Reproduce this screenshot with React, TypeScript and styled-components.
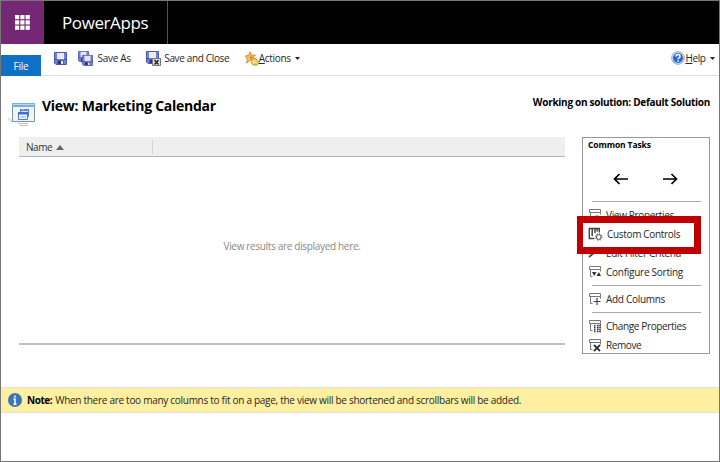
import React from 'react';
import styled, { createGlobalStyle } from 'styled-components';

const GlobalStyle = createGlobalStyle`
  *, *::before, *::after { box-sizing: border-box; }
  body { margin: 0; background: #fff; }
`;

const Page = styled.div`
  display: flex;
  flex-direction: column;
  width: 720px;
  height: 462px;
  border: 1px solid #777;
  background: #fff;
  color: #262626;
  font-family: "Open Sans", "Noto Sans", sans-serif;
  font-size: 10px;
  line-height: 14px;
  letter-spacing: -0.3px;
  white-space: nowrap;
  overflow: hidden;
  svg { display: block; flex: none; }
`;

const TopBar = styled.header`
  display: flex;
  flex: none;
  height: 43px;
  background: #000;
`;

const Launcher = styled.button`
  display: grid;
  place-items: center;
  width: 43px;
  padding: 0;
  border: 0;
  background: #742774;
`;

const Brand = styled.div`
  display: flex;
  align-items: center;
  width: 124px;
  padding: 1px 0 0 18px;
  border-right: 1px solid #555;
  color: #fff;
  font-size: 17px;
  letter-spacing: -0.4px;
`;

const Ribbon = styled.div`
  display: flex;
  flex: none;
  height: 32px;
`;

const FileTab = styled.button`
  align-self: flex-end;
  width: 40px;
  height: 21px;
  padding: 1px 0 0;
  border: 0;
  background: #0f70c6;
  color: #fff;
  font: inherit;
  letter-spacing: -0.2px;
`;

const Commands = styled.div`
  display: flex;
  flex: 1;
  align-items: center;
  padding: 0 4px 3px 13px;
  border-bottom: 1px solid #dedede;
`;

const Command = styled.div<{ $gap?: number; $after?: number; $tracking?: number }>`
  display: flex;
  align-items: center;
  gap: ${p => p.$gap ?? 5}px;
  margin-right: ${p => p.$after ?? 0}px;
  letter-spacing: ${p => p.$tracking ?? -0.3}px;
  &:last-child { margin-left: auto; }
`;

const CaretMark = styled.svg`
  margin: 1px 0 0 4px;
`;

const TitleRow = styled.div`
  display: flex;
  flex: none;
  justify-content: space-between;
  height: 61px;
  padding: 19px 9px 0 8px;
  color: #000;
  font-weight: 700;
`;

const TitleGroup = styled.div`
  display: flex;
  gap: 6px;
  svg { margin: 6px 1px 0 -1px; }
`;

const Title = styled.h1`
  margin: 0;
  font-size: 14px;
  line-height: 22px;
  letter-spacing: -0.26px;
`;

const Solution = styled.div`
  letter-spacing: -0.28px;
`;

const Main = styled.main`
  display: flex;
  flex: none;
  justify-content: space-between;
  align-items: flex-start;
  height: 250px;
  padding: 0 9px 0 18px;
`;

const Grid = styled.section`
  display: flex;
  flex-direction: column;
  width: 546px;
  height: 208px;
  border-bottom: 2px solid #c0c0c0;
`;

const GridHead = styled.div`
  display: flex;
  align-items: center;
  height: 20px;
  border-bottom: 1px solid #b4b4b4;
  background: #efefef;
`;

const HeadCell = styled.div`
  display: flex;
  align-items: center;
  gap: 4px;
  width: 134px;
  height: 14px;
  padding-left: 7px;
  border-right: 1px solid #d4d4d4;
  color: #333;
  letter-spacing: -0.45px;
`;

const SortMark = styled.span`
  margin-top: 2px;
  border: 4px solid transparent;
  border-top: 0;
  border-bottom: 5px solid #666;
`;

const Empty = styled.div`
  display: grid;
  flex: 1;
  place-items: center;
  padding-bottom: 8px;
  color: #888;
  letter-spacing: -0.325px;
`;

const Tasks = styled.aside`
  position: relative;
  width: 128px;
  height: 217px;
  border: 1px solid #999;
  overflow: visible;
`;

const TasksTitle = styled.h2`
  margin: 1px 0 0 5px;
  color: #000;
  font-size: 8.5px;
  line-height: 12px;
  letter-spacing: -0.12px;
`;

const Arrows = styled.div`
  display: flex;
  gap: 35px;
  height: 50px;
  padding: 21px 0 0 30px;
`;

const Rule = styled.hr`
  width: 109px;
  height: 1px;
  margin: 0 0 0 9px;
  border: 0;
  background: #aaa;
`;

const TaskList = styled.div<{ $pad: string }>`
  padding: ${p => p.$pad};
`;

const Task = styled.div<{ $tracking: number }>`
  display: flex;
  align-items: center;
  gap: 4px;
  height: 19px;
  padding-left: 5px;
  letter-spacing: ${p => p.$tracking}px;
`;

const Highlight = styled.div`
  position: absolute;
  top: 78px;
  left: -6px;
  width: 124px;
  height: 38px;
  border: 7px solid #c00000;
  border-left-width: 6px;
  background: #fff;
  ${Task} { height: 22px; }
`;

const Note = styled.div`
  display: flex;
  flex: none;
  align-items: center;
  height: 26px;
  padding-left: 7px;
  border: solid #dedede;
  border-width: 1px 0;
  background: #ffefa0;
  strong { margin: 0 3px 0 5px; color: #000; letter-spacing: -0.45px; }
  span { letter-spacing: -0.284px; }
`;

const Caret = () => (
  <CaretMark width="5" height="3"><path d="M0 0h5L2.5 3z" fill="#222" /></CaretMark>
);

const Disk = ({ x = 0, y = 0, s = 1 }: { x?: number; y?: number; s?: number }) => (
  <g transform={`translate(${x} ${y}) scale(${s})`}>
    <path d="M.5.5h12v12H2L.5 11z" fill="#7480d2" stroke="#4c58ac" />
    <path d="M3 1h7v6H3z" fill="#e6eafb" />
    <path d="M1 7h2v1H1zM10 7h2v1h-2z" fill="#3446b0" />
    <path d="M3.5 8.5h6V12h-6z" fill="#27358c" />
    <path d="M7 9h2v3H7z" fill="#e9edff" />
  </g>
);

const SaveIcon = () => <svg width="13" height="13"><Disk /></svg>;
const SaveAsIcon = () => (
  <svg width="15" height="15">
    <Disk s={0.85} />
    <Disk x={4} y={4} s={0.84} />
  </svg>
);
const SaveCloseIcon = () => (
  <svg width="15" height="15">
    <Disk />
    <path d="M6.5 7.5h8v7h-8z" fill="#dedede" stroke="#777" />
    <path d="M8.5 9l4 4.5m0-4.5l-4 4.5" stroke="#222" strokeWidth="1.4" />
  </svg>
);
const ActionsIcon = () => (
  <svg width="14" height="15">
    <path d="M5 .8l1.5 3.4 4-.2-2.8 3 1.2 4-3.6-1.7L1.6 12l.7-4L.3 5l3.5-.7z" fill="#f8bb68" stroke="#dc812c" strokeWidth=".9" />
    <path d="M5.5 5.5l3 2.2 1.5-.5 3.5 3.3c1 2-.8 3.8-3 3.7-2 0-3.8-1-4.2-2.6l1-1z" fill="#f6cd50" stroke="#a77913" strokeWidth=".8" />
    <path d="M7 11l2.5-1.4M8 12.5l2.5-1.3" stroke="#fff2ae" />
  </svg>
);
const HelpIcon = () => (
  <svg width="14" height="14">
    <circle cx="7" cy="7" r="6.3" fill="#dbe5f5" stroke="#8c9fc2" />
    <circle cx="7" cy="7" r="5" fill="#286bd0" />
    <path d="M5 5.4c0-2.4 4-2.4 4 0C9 7 7.1 6.8 7.1 8.3M7.1 9.3v1.4" fill="none" stroke="#fff" strokeWidth="1.5" />
  </svg>
);
const ViewIcon = () => (
  <svg width="27" height="26">
    <path d="M0 16l4 3v3l-4-3z" fill="#e2e2e2" />
    <path d="M4.5 2.5h22v18h-22z" fill="#f1f4f5" stroke="#7f9299" />
    <path d="M4 2h23v4H4z" fill="#78afdc" />
    <path d="M5 3h21v1H5z" fill="#b8d9f1" />
    <path d="M12.5 8.5h8v7h-8z" fill="#d5e4ff" stroke="#4d79d1" />
    <path d="M12 8h9v2h-9z" fill="#5c83df" />
    <path d="M14 8h2v1h-2z" fill="#e79ac4" />
    <path d="M10.5 11.5h9v7h-9z" fill="#f1f6ff" stroke="#4d79d1" />
    <path d="M10 11h10v2.5H10z" fill="#3e6fd5" />
    <path d="M12 16h6" stroke="#91aee6" />
    <path d="M10 22.5h10M12 24.5h8" stroke="#b3c3cf" />
  </svg>
);

const glyphs: Record<string, React.ReactNode> = {
  view: <path d="M7 8h4v4H7z" />,
  sort: <><path d="M4 7h4.4L6.2 11z" fill="#333" stroke="none" /><path d="M8.6 11H13l-2.2-4z" fill="#333" stroke="none" /></>,
  add: <path d="M9 6v7M5.5 9.5h7" stroke="#444" strokeWidth="1.2" />,
  change: <path d="M6 6.5h1.5M9 6.5h4M6 8.5h1.5M9 8.5h4M6 10.5h1.5M9 10.5h4M6 12.5h1.5M9 12.5h4" stroke="#333" strokeDasharray="1.6 .7" strokeWidth="1.3" />,
  remove: <path d="M6 7l6 6m0-6l-6 6" stroke="#333" strokeWidth="1.8" />,
};

const TaskIcon = ({ kind }: { kind: string }) => {
  if (kind === 'custom') {
    return (
      <svg width="15" height="14" fill="none" stroke="#444">
        <path d="M1.3 11.5V1.5h10v4M.6 11.5h5.8" strokeWidth="1.4" />
        <path d="M4.2 2v7M7 2v4M9.2 2v2.5" strokeWidth="1.5" />
        <circle cx="10.8" cy="10" r="2.4" />
        <circle cx="10.8" cy="10" r="3.3" strokeDasharray="1 1.6" />
      </svg>
    );
  }
  if (kind === 'filter') {
    return (
      <svg width="14" height="14" fill="none" stroke="#444">
        <path d="M7 6L1 11" strokeWidth="1.8" />
        <path d="M6 4l4 3 2-2" />
      </svg>
    );
  }
  return (
    <svg width="14" height="14" fill="none" stroke="#777">
      <path d="M4.5 11.5h-2v-7M1.5 1.5h11v3h-11zM12.5 4.5v2" />
      {glyphs[kind]}
    </svg>
  );
};

const Item = ({ kind, text, tracking }: { kind: string; text: string; tracking: number }) => (
  <Task $tracking={tracking}><TaskIcon kind={kind} />{text}</Task>
);

export default function App() {
  return (
    <>
      <GlobalStyle />
      <Page>
        <TopBar>
          <Launcher aria-label="App launcher">
            <svg width="15" height="15" fill="#fff">
              {[0, 5.3, 10.6].map(y => [0, 5.3, 10.6].map(x => <rect key={`${x}-${y}`} x={x} y={y} width="4.2" height="4.2" />))}
            </svg>
          </Launcher>
          <Brand>PowerApps</Brand>
        </TopBar>
        <Ribbon>
          <FileTab>File</FileTab>
          <Commands>
            <Command $after={11}><SaveIcon /></Command>
            <Command $gap={4.5} $after={15}><SaveAsIcon />Save As</Command>
            <Command $gap={3.5} $after={15.5} $tracking={-0.35}><SaveCloseIcon />Save and Close</Command>
            <Command $gap={0}><ActionsIcon /><span><u>A</u>ctions</span><Caret /></Command>
            <Command $gap={0.5} $tracking={-0.4}><HelpIcon /><span><u>H</u>elp</span><Caret /></Command>
          </Commands>
        </Ribbon>
        <TitleRow>
          <TitleGroup><ViewIcon /><Title>View: Marketing Calendar</Title></TitleGroup>
          <Solution>Working on solution: Default Solution</Solution>
        </TitleRow>
        <Main>
          <Grid>
            <GridHead><HeadCell>Name<SortMark /></HeadCell></GridHead>
            <Empty>View results are displayed here.</Empty>
          </Grid>
          <Tasks>
            <TasksTitle>Common Tasks</TasksTitle>
            <Arrows>
              <svg width="15" height="14" fill="none" stroke="#000" strokeWidth="1.7"><path d="M15 7H1.5M6.5 2l-5 5 5 5" /></svg>
              <svg width="15" height="14" fill="none" stroke="#000" strokeWidth="1.7"><path d="M0 7h13.5M8.5 2l5 5-5 5" /></svg>
            </Arrows>
            <Rule />
            <TaskList $pad="3px 0 4px">
              <Item kind="view" text="View Properties" tracking={-0.32} />
              <Item kind="custom" text="Custom Controls" tracking={-0.33} />
              <Item kind="filter" text="Edit Filter Criteria" tracking={-0.28} />
              <Item kind="sort" text="Configure Sorting" tracking={-0.26} />
            </TaskList>
            <Rule />
            <TaskList $pad="3px 0 4px"><Item kind="add" text="Add Columns" tracking={-0.3} /></TaskList>
            <Rule />
            <TaskList $pad="3px 0 0">
              <Item kind="change" text="Change Properties" tracking={-0.36} />
              <Item kind="remove" text="Remove" tracking={-0.4} />
            </TaskList>
            <Highlight><Item kind="custom" text="Custom Controls" tracking={-0.33} /></Highlight>
          </Tasks>
        </Main>
        <Note>
          <svg width="14" height="14">
            <circle cx="7" cy="7" r="7" fill="#3d76b5" />
            <path d="M7 2.5v2M7 5.5v6M5.5 6H7M5.5 11.3h3" stroke="#fff" strokeWidth="1.5" />
          </svg>
          <strong>Note:</strong>
          <span>When there are too many columns to fit on a page, the view will be shortened and scrollbars will be added.</span>
        </Note>
      </Page>
    </>
  );
}
